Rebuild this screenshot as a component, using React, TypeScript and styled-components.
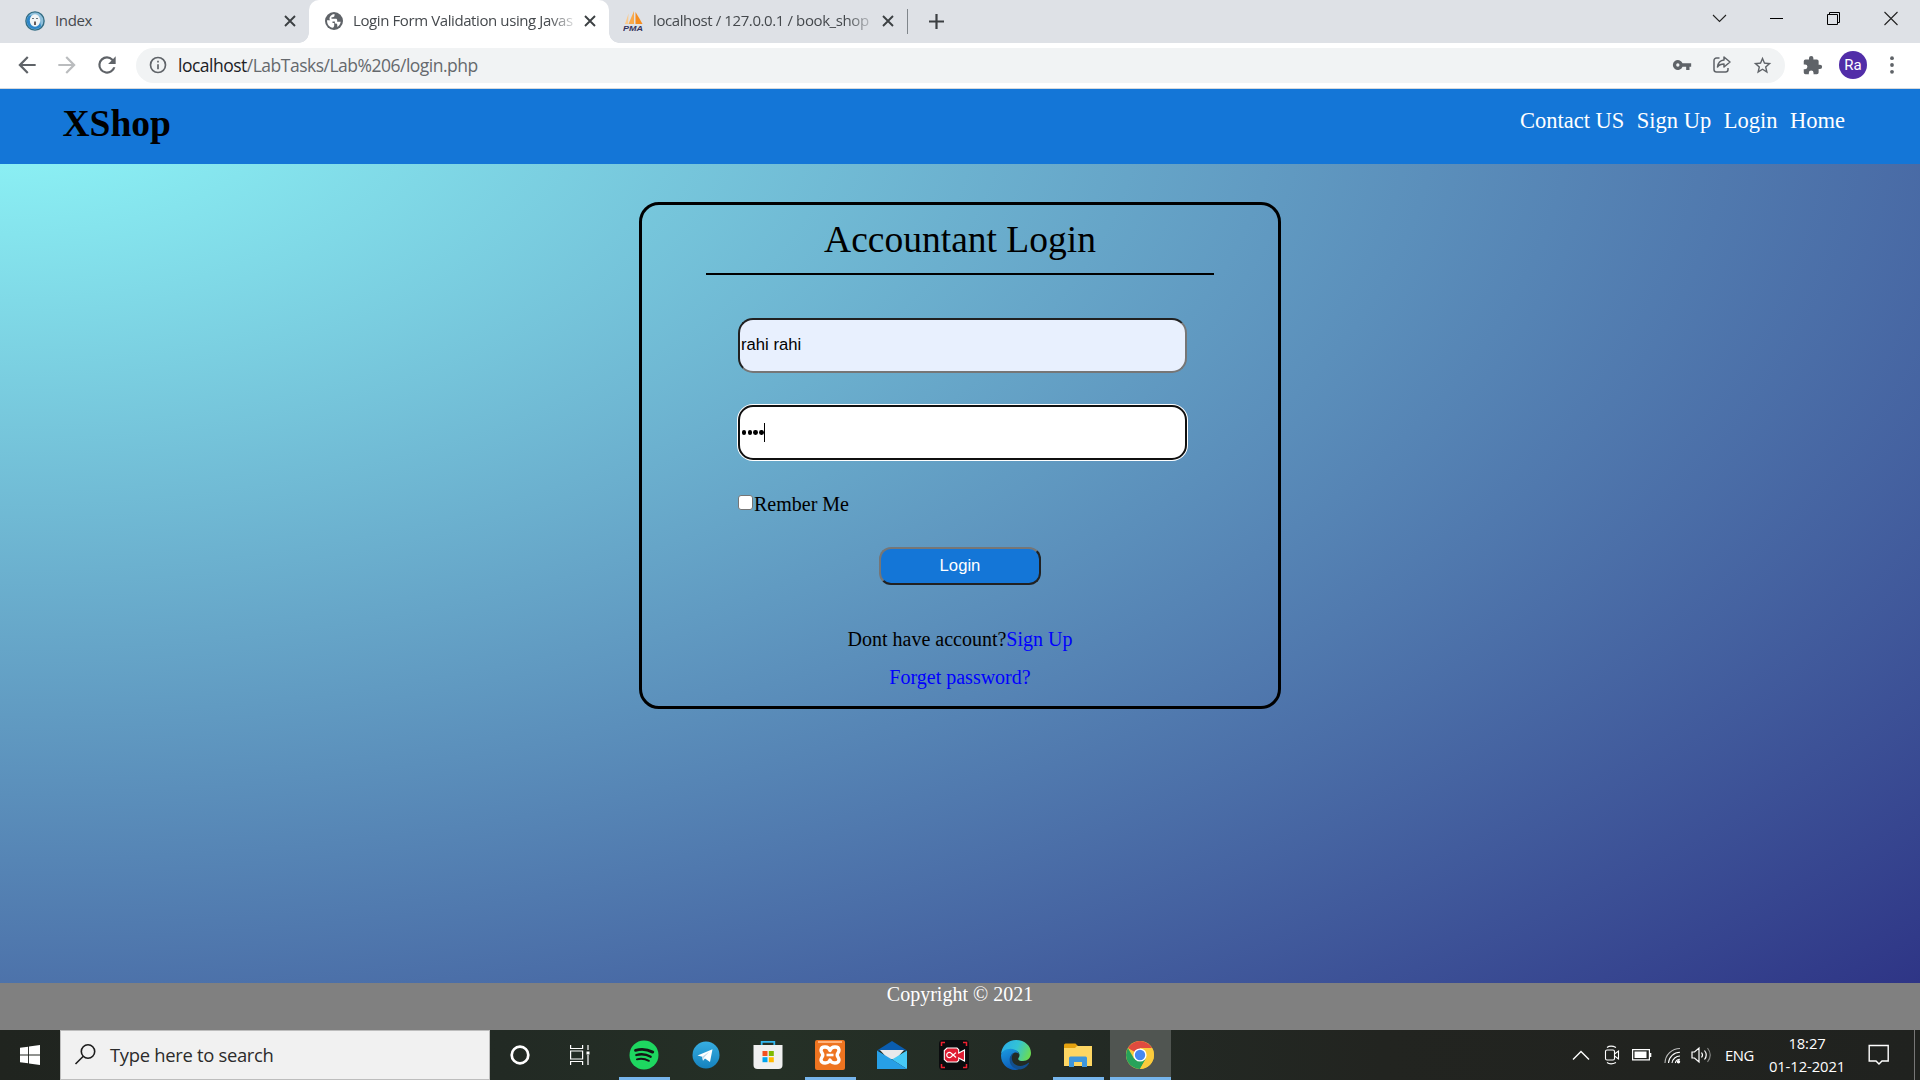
import React from 'react';
import styled, { createGlobalStyle } from 'styled-components';

const ui = `'Open Sans', 'Noto Sans', sans-serif`;
const serif = `'Liberation Serif', 'Times New Roman', serif`;
const sans = `'Liberation Sans', Arial, sans-serif`;

const Global = createGlobalStyle`
  * { box-sizing: border-box; }
  body { margin: 0; overflow: hidden; background: #fff; }
`;

const Screen = styled.div`
  width: 1920px;
  height: 1080px;
  display: flex;
  flex-direction: column;
  overflow: hidden;
`;

/* ---------- browser chrome ---------- */
const TabStrip = styled.div`
  height: 43px;
  flex: none;
  background: #dee1e6;
  display: flex;
  font-family: ${ui};
`;

const Tab = styled.div<{ $w: number; $pl: number; $active?: boolean }>`
  position: relative;
  width: ${(p) => p.$w}px;
  height: 43px;
  display: flex;
  align-items: center;
  padding: 0 13px 1px ${(p) => p.$pl}px;
  background: ${(p) => (p.$active ? '#fff' : 'transparent')};
  border-radius: 10px 10px 0 0;
  &::before, &::after {
    content: '';
    display: ${(p) => (p.$active ? 'block' : 'none')};
    position: absolute;
    bottom: 0;
    width: 10px;
    height: 10px;
  }
  &::before { left: -10px; background: radial-gradient(circle at 0 0, transparent 9.5px, #fff 10px); }
  &::after { right: -10px; background: radial-gradient(circle at 100% 0, transparent 9.5px, #fff 10px); }
`;

const TabTitle = styled.span<{ $ls: number; $fade?: boolean }>`
  flex: 1;
  margin: 0 9px 2px 10px;
  font-size: 15px;
  line-height: 22px;
  letter-spacing: ${(p) => p.$ls}px;
  color: #45494d;
  white-space: nowrap;
  ${(p) => p.$fade && 'mask-image: linear-gradient(to right, #000 88%, transparent 102%);'}
`;

const TabDivider = styled.div`
  width: 1px;
  height: 25px;
  margin: 9px 20px 0 0;
  background: #80868b;
`;

const Spacer = styled.div`flex: 1;`;

const NewTab = styled.div`
  display: flex;
  align-items: center;
  height: 42px;
`;

const WindowButtons = styled.div`
  display: flex;
  height: 36px;
  align-items: center;
  gap: 37px;
  padding-right: 19px;
  svg { display: block; }
`;

const Toolbar = styled.div`
  height: 46px;
  flex: none;
  display: flex;
  align-items: center;
  background: #fff;
  border-bottom: 1px solid #d5d8dc;
  padding: 0 12px 1px 14px;
  font-family: ${ui};
`;

const NavIcons = styled.div`
  display: flex;
  gap: 14px;
  width: 122px;
`;

const Omnibox = styled.div`
  width: 1649px;
  height: 35px;
  border-radius: 18px;
  background: #f1f3f4;
  display: flex;
  align-items: center;
  padding: 0 12px 0 12px;
`;

const Url = styled.div`
  flex: 1;
  margin-left: 10px;
  font-size: 17.5px;
  letter-spacing: -0.5px;
  line-height: 24px;
  color: #65696d;
  b { color: #202124; font-weight: 400; }
`;

const OmniActions = styled.div`
  display: flex;
  gap: 20px;
  align-items: center;
`;

const ToolbarActions = styled.div`
  flex: 1;
  display: flex;
  align-items: center;
  padding-left: 17px;
`;

const Avatar = styled.div`
  width: 28px;
  height: 28px;
  margin: 0 23px 0 16px;
  border-radius: 50%;
  background: #512da8;
  color: #fff;
  font: 15px/28px Roboto, sans-serif;
  text-align: center;
`;

/* ---------- web page ---------- */
const Page = styled.div`
  height: 941px;
  flex: none;
  display: flex;
  flex-direction: column;
  background: radial-gradient(ellipse farthest-corner at top left, #90fafa 0%, #2c3083 100%);
`;

const SiteHeader = styled.header`
  height: 75px;
  flex: none;
  background: #1476d7;
  display: flex;
  justify-content: space-between;
  align-items: flex-start;
  padding: 0 75px 0 62.5px;
  font-family: ${serif};
`;

const Brand = styled.h1`
  margin: 13px 0 0;
  font-size: 37.5px;
  line-height: 44px;
  font-weight: 700;
  color: #000;
`;

const SiteNav = styled.nav`
  display: flex;
  gap: 12.5px;
  margin-top: 17px;
`;

const NavLink = styled.a`
  color: #fff;
  font-size: 22.5px;
  line-height: 29px;
`;

const Main = styled.main`
  flex: 1;
  padding-top: 38px;
`;

const Card = styled.form`
  width: 642px;
  height: 507px;
  margin: 0 auto;
  border: 3px solid #000;
  border-radius: 20px;
  display: flex;
  flex-direction: column;
  align-items: center;
  font-family: ${serif};
  font-size: 20px;
  line-height: 23px;
`;

const CardTitle = styled.h2`
  width: 508px;
  height: 70px;
  margin: 0;
  padding-top: 13px;
  border-bottom: 2px solid #000;
  font-size: 37.5px;
  font-weight: 400;
  line-height: 44px;
  text-align: center;
`;

const Fields = styled.div`
  width: 449px;
  margin: 43px 0 0 5px;
  display: flex;
  flex-direction: column;
`;

const Field = styled.div<{ $focus?: boolean }>`
  height: 55px;
  margin-bottom: 32px;
  padding: 0 0 ${(p) => (p.$focus ? 0 : 2)}px 1px;
  display: flex;
  align-items: center;
  border-radius: 15px;
  background: ${(p) => (p.$focus ? '#fff' : '#e8f0fe')};
  border: 2px ${(p) => (p.$focus ? 'solid #101010' : 'inset #767676')};
  ${(p) => p.$focus && 'box-shadow: 0 0 0 1px #fff;'}
  font: 16.67px/20px ${sans};
  color: #000;
`;

const Dots = styled.div`
  display: flex;
  gap: 1.2px;
  padding: 0 0.2px 0 0.8px;
`;

const Dot = styled.i`
  width: 4.6px;
  height: 4.8px;
  border-radius: 50%;
  background: #000;
`;

const Caret = styled.i`
  width: 1px;
  height: 19px;
  background: #000;
`;

const Remember = styled.label`
  display: flex;
  margin-top: 1px;
  height: 27px;
`;

const Box = styled.span`
  width: 15px;
  height: 15px;
  margin: 2px 1px 0 0;
  border: 1px solid #767676;
  border-radius: 3px;
  background: #fff;
`;

const LoginButton = styled.button`
  width: 162px;
  height: 38px;
  margin-top: 27px;
  padding: 0;
  border: 2px outset #767676;
  border-radius: 12px;
  background: #1476d7;
  color: #fff;
  font: 16.67px/20px ${sans};
`;

const Line = styled.p<{ $top: number }>`
  margin: ${(p) => p.$top}px 0 0;
  a { color: #0000ff; }
`;

const Footer = styled.footer`
  height: 47px;
  flex: none;
  background: #808080;
  color: #fff;
  text-align: center;
  font: 20px/23px ${serif};
`;

/* ---------- taskbar ---------- */
const Taskbar = styled.div`
  height: 50px;
  flex: none;
  display: flex;
  background: linear-gradient(to right, #20241f 0%, #222a24 26%, #253026 40%, #232b25 55%, #222420 72%, #20221f 100%);
  font-family: ${ui};
  color: #fff;
`;

const Start = styled.div`
  width: 60px;
  display: flex;
  align-items: center;
  justify-content: center;
`;

const Search = styled.div`
  width: 430px;
  border: 1px solid #bdbdbd;
  background: #f1f1f1;
  color: #2b2b2b;
  display: flex;
  align-items: center;
  padding: 0 0 2px 13px;
  font-size: 18.4px;
  letter-spacing: -0.3px;
  gap: 14px;
`;

const Slot = styled.div`
  width: 60px;
  display: flex;
  align-items: center;
  justify-content: center;
`;

const AppSlot = styled.div<{ $open?: boolean; $focused?: boolean }>`
  width: ${(p) => (p.$focused ? 61 : 51)}px;
  margin: ${(p) => (p.$focused ? '0 0 0 1px' : '0 5px 0 6px')};
  padding-right: 2px;
  height: 50px;
  display: flex;
  align-items: center;
  justify-content: center;
  background: ${(p) => (p.$focused ? '#505551' : 'transparent')};
  box-shadow: ${(p) => (p.$open ? 'inset 0 -3px 0 #76b5ec' : 'none')};
`;

const Tray = styled.div`
  display: flex;
  align-items: center;
  svg { display: block; }
`;

const Lang = styled.span`
  margin-left: 12px;
  width: 30px;
  font-size: 14.8px;
  letter-spacing: -0.4px;
`;

const Clock = styled.div`
  width: 88px;
  margin-left: 8px;
  font-size: 14.8px;
  letter-spacing: -0.1px;
  line-height: 23px;
  text-align: center;
  white-space: nowrap;
`;

const Gap = styled.div<{ $w: number }>`width: ${(p) => p.$w}px;`;

const ShowDesktop = styled.div`
  width: 6px;
  height: 50px;
  border-left: 1px solid #777;
`;

/* ---------- icons ---------- */
const Cross = () => (
  <svg width="12" height="12" viewBox="0 0 12 12" stroke="#3c4043" strokeWidth="1.9"><path d="M1 1l10 10M11 1L1 11" /></svg>
);

const Mat = ({ d, size = 22, fill = '#5f6368' }: { d: string; size?: number; fill?: string }) => (
  <svg width={size} height={size} viewBox="0 0 24 24" fill={fill}><path d={d} /></svg>
);

const SealIcon = () => (
  <svg width="20" height="20" viewBox="0 0 20 20">
    <circle cx="10" cy="10" r="9.1" fill="#8fc0dc" stroke="#336d84" strokeWidth="1.4" />
    <path d="M4 4.500A8 8 0 0 0 10 18a8 8 0 0 0 6-2.500L14 5z" fill="#2d86c8" />
    <ellipse cx="10" cy="9.500" rx="5.200" ry="6.200" fill="#f1f4f5" />
    <path d="M7.200 7.500h1.600M11.200 7.500h1.600" stroke="#4e5960" strokeWidth="1.200" />
    <path d="M9 10.500h2V14H9z" fill="#665b5a" />
  </svg>
);

const Globe = () => (
  <svg width="18" height="18" viewBox="0 0 18 18">
    <circle cx="9" cy="9" r="9" fill="#5f6368" />
    <path d="M2 8.200h3.800c1.400 0 1.700.8 1.700 1.700v1h1.700v2.500c0 1-.6 1.800-1.500 2.400C4.400 15.200 2 12.500 2 8.200zM9.500 2v1.600c0 1-.8 1.600-1.700 1.600H6.500v1.600h4.200c1 0 1.500.7 1.500 1.500v1.500h3.500c-.2 2.200-1.500 4.200-3.400 5.300V13c0-.9-.6-1.500-1.500-1.500h-.9V9.600H6.500L4.400 7.300C4.400 4.500 6.300 2.300 9.500 2z" fill="#fff" />
  </svg>
);

const PmaIcon = () => (
  <svg width="20" height="20" viewBox="0 0 20 20">
    <path d="M5.500 2.500L2 13h3z" fill="#fbc98a" />
    <path d="M11 0L5.500 13H11z" fill="#f9a94b" />
    <path d="M12.500 1v12H19.500L17 8.500z" fill="#f68c1e" />
    <text x="0" y="19.500" fontFamily="Liberation Sans" fontWeight="700" fontStyle="italic" fontSize="7.600" textLength="20" lengthAdjust="spacingAndGlyphs" fill="#35335c">PMA</text>
  </svg>
);

const ShareIcon = () => (
  <svg width="20" height="20" viewBox="0 0 20 20" fill="none" stroke="#5f6368" strokeWidth="1.500" strokeLinejoin="round">
    <path d="M7.500 3H4.500A2.500 2.500 0 0 0 2 5.500v9A2.500 2.500 0 0 0 4.500 17h9a2.500 2.500 0 0 0 2.500-2.500V13" />
    <path d="M12 2l6 5-6 5V9c-3 0-5 .8-6.500 3C6 8 8.500 5.300 12 5z" />
  </svg>
);

const WinLogo = () => (
  <svg width="20" height="20" viewBox="0 0 20 20" fill="#fff">
    <path d="M0 2.800L8.100 1.700V9.500H0zM9 1.500L20 0v9.500H9zM0 10.400h8.100v7.900L0 17.200zM9 10.400h11V20L9 18.500z" />
  </svg>
);

const Spotify = () => (
  <svg width="30" height="30" viewBox="0 0 30 30">
    <circle cx="15" cy="15" r="14.500" fill="#1ed760" />
    <g fill="none" stroke="#141414" strokeLinecap="round">
      <path d="M6.500 10.300c6-1.700 12-1 17.200 1.800" strokeWidth="2.900" />
      <path d="M7.300 15c5-1.400 10-.8 14.400 1.700" strokeWidth="2.300" />
      <path d="M7.900 19.300c4.200-1 8-.6 12 1.500" strokeWidth="1.900" />
    </g>
  </svg>
);

const Telegram = () => (
  <svg width="28" height="28" viewBox="0 0 28 28">
    <defs><linearGradient id="tg" x1="0" y1="0" x2="0" y2="1"><stop stopColor="#37aee2" /><stop offset="1" stopColor="#1581bd" /></linearGradient></defs>
    <circle cx="14" cy="14" r="13.500" fill="url(#tg)" />
    <path d="M5.500 14.500L20.500 8.300 18 21l-5-3.500-2 2.300-.8-4z" fill="#fff" />
    <path d="M10.200 15.800l7-5-5.500 6.200-.7 2.800z" fill="#c5dcec" />
  </svg>
);

const Store = () => (
  <svg width="30" height="30" viewBox="0 0 30 30">
    <path d="M8.700 6V1.800h12.600V6" fill="none" stroke="#33b8f1" strokeWidth="1.800" />
    <path d="M.5 5h29v20a4 4 0 0 1-4 4h-21a4 4 0 0 1-4-4z" fill="#f0f0f0" />
    <path d="M9.500 11h5v5h-5z" fill="#f25022" /><path d="M15.800 11h5v5h-5z" fill="#7fba00" />
    <path d="M9.500 17.200h5v5h-5z" fill="#00a4ef" /><path d="M15.800 17.200h5v5h-5z" fill="#ffb900" />
  </svg>
);

const Xampp = () => (
  <svg width="30" height="30" viewBox="0 0 30 30">
    <rect width="30" height="30" rx="2" fill="#ee7420" /><path d="M3 1h24v2H3z" fill="#ffb27a" />
    <path d="M15 10.500C13.500 6 6.500 6 6 10c0 2.500 1.800 3.200 1.800 5S6 17.500 6 20c.5 4 7.500 4 9 0 1.500 4 8.500 4 9 0 0-2.500-1.800-3.200-1.800-5S24 12.500 24 10c-.5-4-7.500-4-9 .5z" fill="#ee7420" stroke="#fff" strokeWidth="3.400" strokeLinejoin="round" />
    <path d="M11.500 15h7" stroke="#fff" strokeWidth="2.600" />
  </svg>
);

const Mail = () => (
  <svg width="30" height="28" viewBox="0 0 30 28">
    <path d="M0 9.500L15 0l15 9.500z" fill="#0a5db0" />
    <path d="M3 9h24l-8 9h-8z" fill="#e9e9eb" />
    <path d="M30 9.500L15 18.500 30 28z" fill="#46c9f6" />
    <path d="M0 9.500V28h30L15 18.500z" fill="#279fe6" />
  </svg>
);

const Recorder = () => (
  <svg width="30" height="30" viewBox="0 0 30 30">
    <rect width="30" height="30" rx="4" fill="#0b0c0e" />
    <path d="M2.500 6V2.500H6M24 2.500h3.500V6M27.500 24v3.500H24M6 27.500H2.500V24" fill="none" stroke="#ee2130" strokeWidth="1.500" />
    <path d="M8 8h10l1.700 1.700V13l5.800-3v11l-5.800-3v2.500L18 22H8l-2.700-2.500v-9z" fill="#df1b31" stroke="#fff" strokeWidth="1.100" />
    <path d="M17 17.500l-4.800-4.300a2.600 2.600 0 1 0 0 3.600l4.800-4.200" fill="none" stroke="#fff" strokeWidth="1.200" />
  </svg>
);

const Edge = () => (
  <svg width="30" height="30" viewBox="0 0 30 30">
    <defs>
      <linearGradient id="eg" x1="0" y1=".3" x2="1" y2=".6"><stop stopColor="#2aaee8" /><stop offset=".5" stopColor="#33c3d5" /><stop offset="1" stopColor="#6bdc51" /></linearGradient>
      <linearGradient id="eb" x1="0" y1="0" x2=".4" y2="1"><stop stopColor="#1b9de2" /><stop offset="1" stopColor="#0c5cb8" /></linearGradient>
    </defs>
    <path d="M0 14C1 5.500 7 0 15 0c9 0 15 6 15 13 0 5-3.700 8-8 8-4 0-5.500-1.500-4.500-3 2.800-4-.5-8-6-8C5.500 10 1.500 12 0 14z" fill="url(#eg)" />
    <path d="M0 15.500C0 11.500 4.500 8.700 9.500 8.700c4.500 0 8.500 2.800 8.500 6.800 0-2-1.500-3-3-3-4 0-6.500 4-5 9 1.500 4.700 6 6.800 10 6.300-2 1.500-3.500 2.200-5.500 2.200C6 30 0 23.500 0 15.500z" fill="url(#eb)" />
    <path d="M13 12.900c-3 2.500-3 8 .5 11 4 3.400 10 2 13.500-.9.700-.5 1.300 0 .8.800C25 28 21 30 17.500 29.300 11 28.500 8 23 8.700 18.300 9.200 15.500 11 13.500 13 12.900z" fill="#134f8e" />
  </svg>
);

const Explorer = () => (
  <svg width="28" height="24" viewBox="0 0 28 24">
    <path d="M0 2a1.500 1.500 0 0 1 1.500-1.500h10L14 3H28v5H0z" fill="#e5a20f" />
    <path d="M0 5h11l2-2h15v20H0z" fill="#fdd663" />
    <path d="M5 24V15a1.500 1.500 0 0 1 1.500-1.500h15A1.500 1.500 0 0 1 23 15v9h-5v-5h-8v5z" fill="#3e96dc" />
  </svg>
);

const Chrome = () => (
  <svg width="28" height="28" viewBox="0 0 28 28">
    <circle cx="14" cy="14" r="14" fill="#fbcb3c" />
    <path d="M14 14L1.900 7A14 14 0 0 1 26.100 7H14z" fill="#e04b3f" />
    <path d="M1.900 7A14 14 0 0 0 14 28l6-10.500L14 14 8 17.500z" fill="#27a35a" />
    <path d="M14 7h12.100A14 14 0 0 1 14 28l6-10.500z" fill="#fbcb3c" />
    <circle cx="14" cy="14" r="6.600" fill="#fff" /><circle cx="14" cy="14" r="5.200" fill="#4688f1" />
  </svg>
);

const App = () => (
  <Screen>
    <Global />
    <TabStrip>
      <Tab $w={309} $pl={25}>
        <SealIcon /><TabTitle $ls={-0.35}>Index</TabTitle><Cross />
      </Tab>
      <Tab $w={300} $pl={16} $active>
        <Globe /><TabTitle $ls={-0.4} $fade>Login Form Validation using Javas</TabTitle><Cross />
      </Tab>
      <Tab $w={298} $pl={14}>
        <PmaIcon /><TabTitle $ls={-0.4} $fade>localhost / 127.0.0.1 / book_shop</TabTitle><Cross />
      </Tab>
      <TabDivider />
      <NewTab>
        <svg width="17" height="17" viewBox="0 0 17 17" stroke="#3c4043" strokeWidth="2.200"><path d="M8.500 1v15M1 8.500h15" /></svg>
      </NewTab>
      <Spacer />
      <WindowButtons>
        <svg width="20" height="20" viewBox="0 0 20 20" fill="none" stroke="#222" strokeWidth="1.100"><path d="M3 7l6.500 6.500L16 7" /></svg>
        <svg width="20" height="20" viewBox="0 0 20 20" stroke="#000"><path d="M3 10.500h13" /></svg>
        <svg width="20" height="20" viewBox="0 0 20 20" fill="none" stroke="#000"><path d="M3.500 6.500h10v10h-10zM5.500 6V4.500h10v10H14" /></svg>
        <svg width="20" height="20" viewBox="0 0 20 20" stroke="#222" strokeWidth="1.100"><path d="M3.500 4l13 13M16.500 4l-13 13" /></svg>
      </WindowButtons>
    </TabStrip>
    <Toolbar>
      <NavIcons>
        <Mat size={26} d="M20 11H7.830l5.590-5.590L12 4l-8 8 8 8 1.410-1.410L7.830 13H20v-2z" />
        <Mat size={26} fill="#babcbe" d="M12 4l-1.410 1.410L16.170 11H4v2h12.170l-5.580 5.590L12 20l8-8z" />
        <Mat size={26} d="M17.650 6.350A7.960 7.960 0 0 0 12 4a8 8 0 1 0 7.730 10h-2.080A6 6 0 1 1 12 6c1.660 0 3.140.69 4.220 1.780L13 11h7V4z" />
      </NavIcons>
      <Omnibox>
        <Mat size={20} d="M11 7h2v2h-2zm0 4h2v6h-2zm1-9a10 10 0 1 0 0 20 10 10 0 0 0 0-20zm0 18a8 8 0 1 1 0-16 8 8 0 0 1 0 16z" />
        <Url><b>localhost</b>/LabTasks/Lab%206/login.php</Url>
        <OmniActions>
          <Mat size={20} d="M12.650 10A6 6 0 1 0 12.650 14H17v4h4v-4h2v-4zM7 14a2 2 0 1 1 0-4 2 2 0 0 1 0 4z" />
          <ShareIcon />
          <Mat size={21} d="M22 9.240l-7.190-.62L12 2 9.190 8.630 2 9.240l5.460 4.730L5.820 21 12 17.270 18.180 21l-1.630-7.030zM12 15.400l-3.760 2.270 1-4.280-3.320-2.880 4.380-.38L12 6.100l1.710 4.040 4.380.38-3.320 2.880 1 4.280z" />
        </OmniActions>
      </Omnibox>
      <ToolbarActions>
        <Mat size={21} d="M20.500 11H19V7a2 2 0 0 0-2-2h-4V3.500a2.500 2.500 0 0 0-5 0V5H4a2 2 0 0 0-2 2v3.800h1.500a2.700 2.700 0 0 1 0 5.400H2V20a2 2 0 0 0 2 2h3.800v-1.500a2.700 2.700 0 0 1 5.400 0V22H17a2 2 0 0 0 2-2v-4h1.500a2.500 2.500 0 0 0 0-5z" />
        <Avatar>Ra</Avatar>
        <svg width="4" height="18" viewBox="0 0 4 18" fill="#5f6368"><circle cx="2" cy="2.200" r="1.900" /><circle cx="2" cy="9" r="1.900" /><circle cx="2" cy="15.800" r="1.900" /></svg>
      </ToolbarActions>
    </Toolbar>

    <Page>
      <SiteHeader>
        <Brand>XShop</Brand>
        <SiteNav>
          <NavLink>Contact US</NavLink><NavLink>Sign Up</NavLink><NavLink>Login</NavLink><NavLink>Home</NavLink>
        </SiteNav>
      </SiteHeader>
      <Main>
        <Card>
          <CardTitle>Accountant Login</CardTitle>
          <Fields>
            <Field>rahi rahi</Field>
            <Field $focus><Dots><Dot /><Dot /><Dot /><Dot /></Dots><Caret /></Field>
            <Remember><Box />Rember Me</Remember>
          </Fields>
          <LoginButton type="button">Login</LoginButton>
          <Line $top={43}>Dont have account?<a>Sign Up</a></Line>
          <Line $top={15}><a>Forget password?</a></Line>
        </Card>
      </Main>
      <Footer>Copyright © 2021</Footer>
    </Page>

    <Taskbar>
      <Start><WinLogo /></Start>
      <Search>
        <svg width="22" height="24" viewBox="0 0 22 24" fill="none" stroke="#1c1c1c" strokeWidth="1.600"><circle cx="14" cy="9.500" r="6.700" /><path d="M9.300 14.300L1.500 22" /></svg>
        Type here to search
      </Search>
      <Slot><svg width="20" height="20" viewBox="0 0 20 20"><circle cx="10" cy="10" r="8.300" fill="none" stroke="#fff" strokeWidth="2.700" /></svg></Slot>
      <Slot>
        <svg width="20" height="20" viewBox="0 0 20 20" fill="none" stroke="#fff" strokeWidth="1.200"><path d="M.6 0v3.500h12V0M.6 20v-3.500h12V20M.6 6h12v8H.6zM18 0v5M18 10v10" /><path d="M16.500 6.500h3v3h-3z" fill="#fff" stroke="none" /></svg>
      </Slot>
      <Gap $w={3} />
      <AppSlot $open><Spotify /></AppSlot>
      <AppSlot><Telegram /></AppSlot>
      <AppSlot><Store /></AppSlot>
      <AppSlot $open><Xampp /></AppSlot>
      <AppSlot><Mail /></AppSlot>
      <AppSlot><Recorder /></AppSlot>
      <AppSlot><Edge /></AppSlot>
      <AppSlot $open><Explorer /></AppSlot>
      <AppSlot $open $focused><Chrome /></AppSlot>
      <Spacer />
      <Tray>
        <svg width="18" height="11" viewBox="0 0 18 11" fill="none" stroke="#fff" strokeWidth="1.400"><path d="M1 9.500L9 1.500l8 8" /></svg>
        <Gap $w={14} />
        <svg width="16" height="20" viewBox="0 0 16 20" fill="none" stroke="#fff" strokeWidth="1.100"><rect x="1.500" y="5" width="9" height="10" rx="1.500" /><path d="M10.500 9l4-3v8l-4-3M3 2.500c2-1.500 6-1.500 9 0M3 17.500c2 1.500 6 1.500 9 0" /></svg>
        <Gap $w={12} />
        <svg width="20" height="12" viewBox="0 0 20 12"><path d="M.6.600h16.800v10.300H.6z" fill="none" stroke="#fff" strokeWidth="1.200" /><path d="M2.500 2.500h12v6.500h-12zM18 4h1.300v4H18z" fill="#fff" /></svg>
        <Gap $w={12} />
        <svg width="17" height="17" viewBox="0 0 17 17" fill="none" stroke="#fff" strokeWidth="1.100"><path d="M1 16A15 15 0 0 1 16 1.500" opacity=".7" /><path d="M4.500 16A11.500 11.500 0 0 1 16 5.300M8 16a8 8 0 0 1 8-7M11.300 16A5 5 0 0 1 16 12.300" /><circle cx="14.500" cy="14.800" r="1.700" fill="#fff" stroke="none" /></svg>
        <Gap $w={10} />
        <svg width="22" height="18" viewBox="0 0 22 18" fill="none" stroke="#fff" strokeWidth="1.200"><path d="M1 6h2.500L8 2v14l-4.500-4H1zM10.500 6.500q2 2.500 0 5M13.500 4.500q3.500 4.500 0 9" /><path d="M16.500 2q5.500 7 0 14" opacity=".45" /></svg>
        <Lang>ENG</Lang>
        <Clock>18:27<br />01-12-2021</Clock>
        <Gap $w={17} />
        <svg width="22" height="22" viewBox="0 0 22 22" fill="none" stroke="#fff" strokeWidth="1.400"><path d="M1.200 1.500h19V17H14l-3 3-3-3H1.200z" /></svg>
        <Gap $w={24} />
        <ShowDesktop />
      </Tray>
    </Taskbar>
  </Screen>
);

export default App;
